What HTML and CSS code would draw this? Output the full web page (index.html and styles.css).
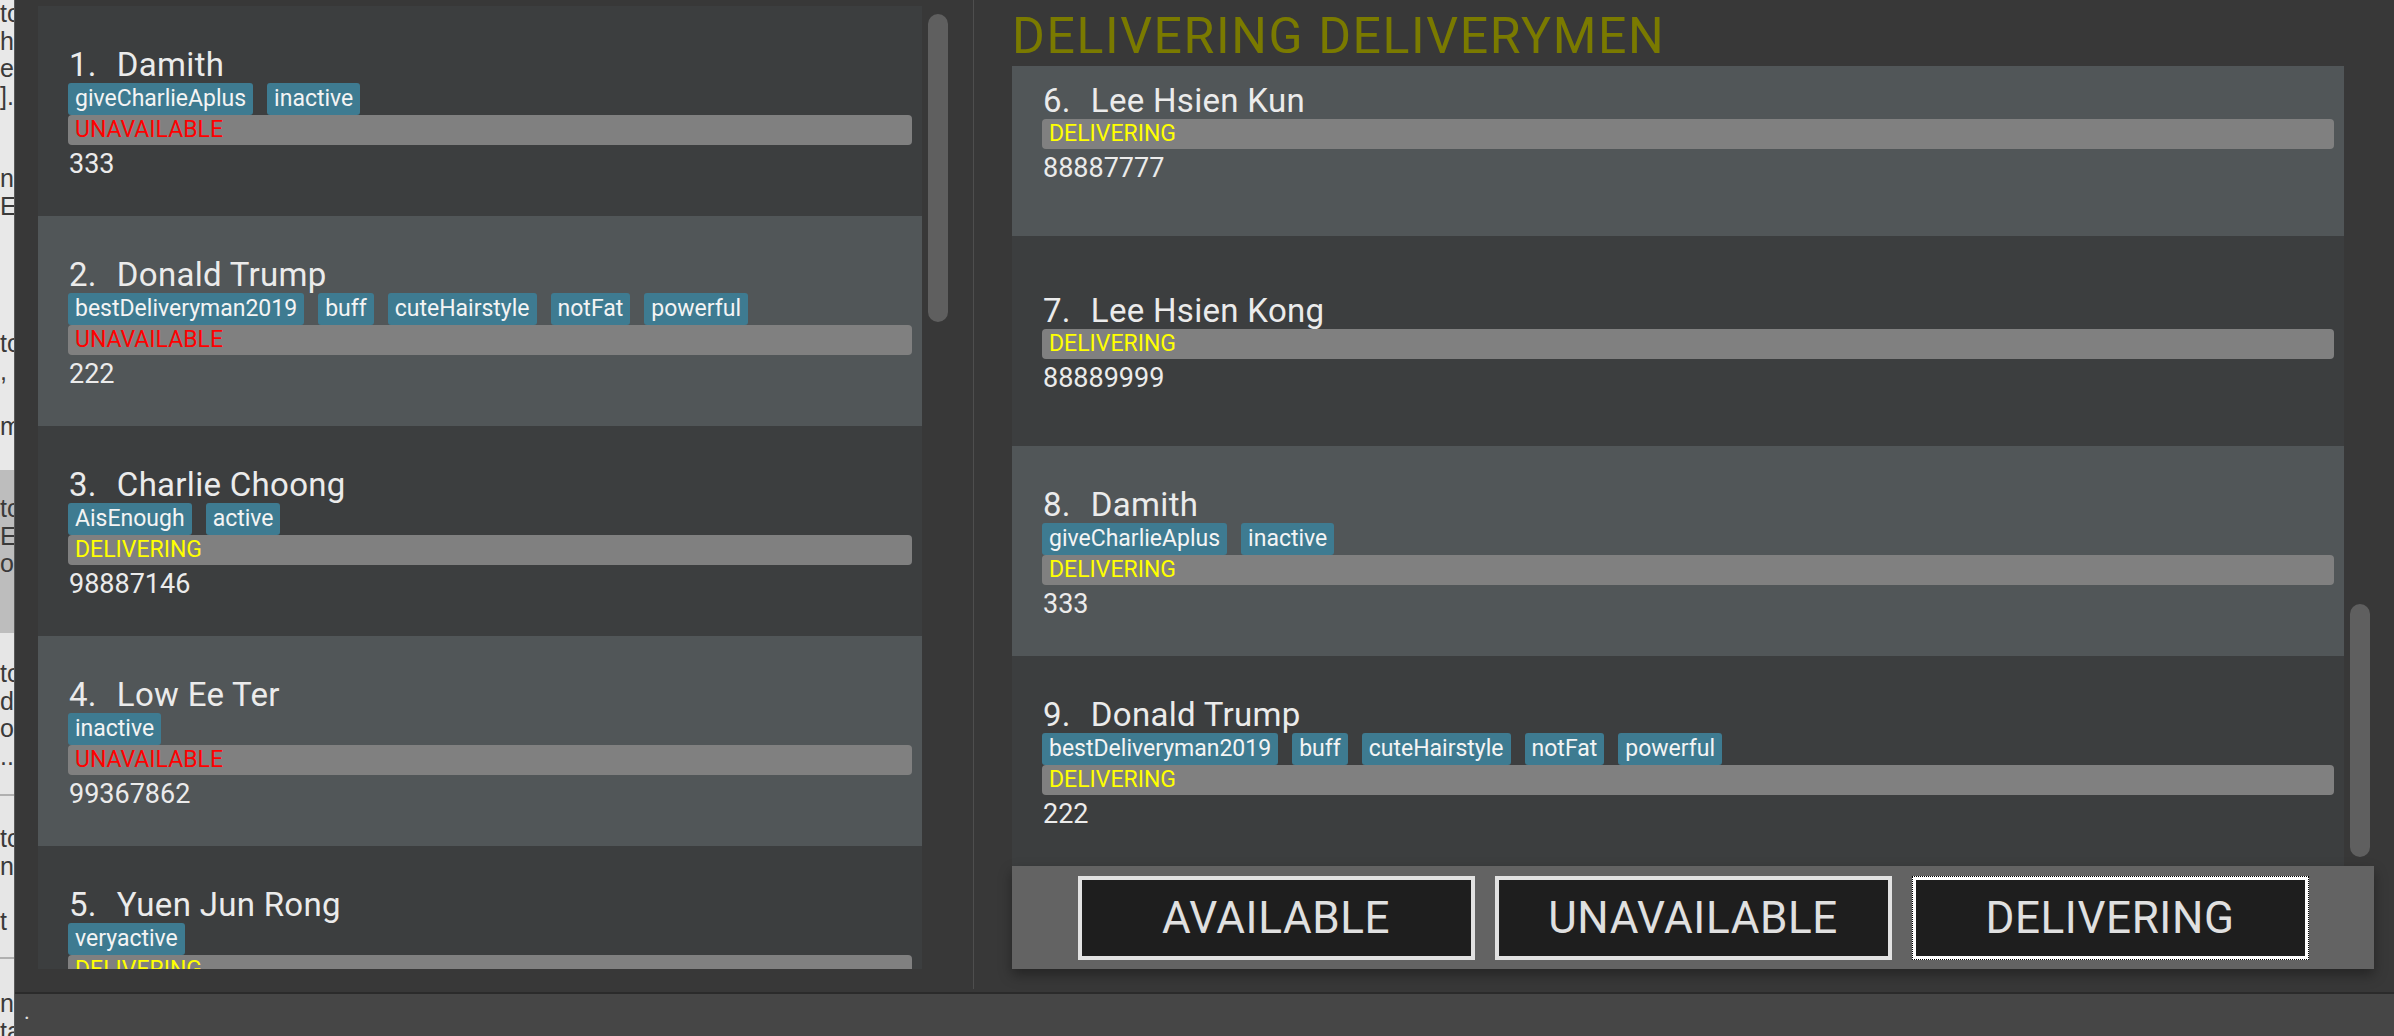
FILE: index.html
```html
<!DOCTYPE html>
<html lang="en">
<head>
<meta charset="utf-8">
<title>Deliverymen</title>
<link rel="stylesheet" href="styles.css">
</head>
<body>
<div class="strip">
  <div class="frag">to</div><div class="frag">h</div><div class="frag">e</div><div class="frag">].</div>
  <div class="frag"></div><div class="frag"></div><div class="frag">na</div><div class="frag">E I</div>
  <div class="frag"></div><div class="frag"></div><div class="frag"></div><div class="frag"></div>
  <div class="frag">to</div><div class="frag">,</div><div class="frag"></div><div class="frag">m</div>
  <div class="frag"></div><div class="frag"></div><div class="frag">to</div><div class="frag">E</div>
  <div class="frag">o</div><div class="frag"></div><div class="frag"></div><div class="frag"></div>
  <div class="frag">to</div><div class="frag">d</div><div class="frag">o</div><div class="frag">..</div>
  <div class="frag"></div><div class="frag"></div><div class="frag">to</div><div class="frag">n</div>
  <div class="frag"></div><div class="frag">t</div><div class="frag"></div><div class="frag"></div>
  <div class="frag">na</div><div class="frag">ta</div>
</div>
<div class="app">
  <div class="main">
    <div class="left-pane">
      <div class="list list-left">
        <div class="card dark">
          <div class="name"><span class="idx">1.</span>Damith</div>
          <div class="tags"><span class="tag">giveCharlieAplus</span><span class="tag">inactive</span></div>
          <div class="status unavailable">UNAVAILABLE</div>
          <div class="phone">333</div>
        </div>
        <div class="card light">
          <div class="name"><span class="idx">2.</span>Donald Trump</div>
          <div class="tags"><span class="tag">bestDeliveryman2019</span><span class="tag">buff</span><span class="tag">cuteHairstyle</span><span class="tag">notFat</span><span class="tag">powerful</span></div>
          <div class="status unavailable">UNAVAILABLE</div>
          <div class="phone">222</div>
        </div>
        <div class="card dark">
          <div class="name"><span class="idx">3.</span>Charlie Choong</div>
          <div class="tags"><span class="tag">AisEnough</span><span class="tag">active</span></div>
          <div class="status delivering">DELIVERING</div>
          <div class="phone">98887146</div>
        </div>
        <div class="card light">
          <div class="name"><span class="idx">4.</span>Low Ee Ter</div>
          <div class="tags"><span class="tag">inactive</span></div>
          <div class="status unavailable">UNAVAILABLE</div>
          <div class="phone">99367862</div>
        </div>
        <div class="card dark">
          <div class="name"><span class="idx">5.</span>Yuen Jun Rong</div>
          <div class="tags"><span class="tag">veryactive</span></div>
          <div class="status delivering">DELIVERING</div>
          <div class="phone">87654321</div>
        </div>
      </div>
      <div class="vscroll vscroll-left"></div>
    </div>
    <div class="divider"></div>
    <div class="right-pane">
      <h1 class="heading">DELIVERING DELIVERYMEN</h1>
      <div class="rcontent">
        <div class="rlist-row">
          <div class="list list-right">
            <div class="list-inner">
              <div class="card light">
                <div class="name"><span class="idx">6.</span>Lee Hsien Kun</div>
                <div class="status delivering">DELIVERING</div>
                <div class="phone">88887777</div>
              </div>
              <div class="card dark">
                <div class="name"><span class="idx">7.</span>Lee Hsien Kong</div>
                <div class="status delivering">DELIVERING</div>
                <div class="phone">88889999</div>
              </div>
              <div class="card light">
                <div class="name"><span class="idx">8.</span>Damith</div>
                <div class="tags"><span class="tag">giveCharlieAplus</span><span class="tag">inactive</span></div>
                <div class="status delivering">DELIVERING</div>
                <div class="phone">333</div>
              </div>
              <div class="card dark">
                <div class="name"><span class="idx">9.</span>Donald Trump</div>
                <div class="tags"><span class="tag">bestDeliveryman2019</span><span class="tag">buff</span><span class="tag">cuteHairstyle</span><span class="tag">notFat</span><span class="tag">powerful</span></div>
                <div class="status delivering">DELIVERING</div>
                <div class="phone">222</div>
              </div>
            </div>
          </div>
          <div class="vscroll vscroll-right"></div>
        </div>
        <div class="btnbar">
          <button class="btn">AVAILABLE</button>
          <button class="btn">UNAVAILABLE</button>
          <button class="btn focus">DELIVERING</button>
        </div>
      </div>
    </div>
  </div>
  <div class="statusbar">.</div>
</div>
</body>
</html>
```

FILE: styles.css
```css
* { box-sizing: border-box; }

html, body {
  margin: 0;
  padding: 0;
}

body {
  width: 2394px;
  height: 1036px;
  overflow: hidden;
  display: flex;
  background: #383838;
  font-family: Roboto, "Liberation Sans", Arial, sans-serif;
  color: #e9e9e9;
}

/* background window sliver on the far left */
.strip {
  width: 15px;
  height: 1036px;
  flex: none;
  overflow: hidden;
  border-right: 1px solid #5a5a5a;
  background:
    linear-gradient(to bottom,
      #e8e8e8 0, #e8e8e8 470px,
      #bdbdbd 470px, #bdbdbd 633px,
      #e6e6e6 633px, #e6e6e6 794px,
      #b0b0b0 794px, #b0b0b0 796px,
      #e6e6e6 796px, #e6e6e6 957px,
      #b0b0b0 957px, #b0b0b0 959px,
      #e6e6e6 959px);
}

.frag {
  height: 27.5px;
  line-height: 27.5px;
  font-size: 25px;
  color: #3a3a3a;
  white-space: nowrap;
  font-family: "Liberation Sans", Arial, sans-serif;
}

.app {
  flex: 1;
  display: flex;
  flex-direction: column;
  min-width: 0;
}

.main {
  height: 992px;
  display: flex;
  background: #383838;
}

.left-pane {
  width: 958px;
  flex: none;
  display: flex;
  padding: 6px 0 0 23px;
}

.list {
  overflow: hidden;
  flex: none;
}

.list-left {
  width: 884px;
  height: 963px;
}

.vscroll {
  width: 20px;
  flex: none;
  background: #5f5f5f;
  border-radius: 10px;
  margin-left: 6px;
}

.vscroll-left {
  margin-top: 8px;
  height: 308px;
}

.divider {
  width: 1px;
  height: 989px;
  background: #4e4e4e;
  flex: none;
}

.right-pane {
  flex: 1;
  padding-left: 38px;
  display: flex;
  flex-direction: column;
}

.heading {
  margin: 0;
  padding-top: 7px;
  height: 66px;
  font-size: 50px;
  line-height: 59px;
  font-weight: 400;
  color: #7a7a00;
  letter-spacing: 1.6px;
  white-space: nowrap;
}

.rcontent {
  width: 1362px;
}

.rlist-row {
  display: flex;
  height: 800px;
}

.list-right {
  width: 1332px;
  height: 800px;
}

.list-inner {
  margin-top: -40px;
}

.vscroll-right {
  margin-top: 538px;
  height: 253px;
}

/* list cells */
.card {
  height: 210px;
  display: flex;
  flex-direction: column;
  justify-content: center;
  padding: 4px 10px 0 30px;
}

.card.dark { background: #3c3e3f; }
.card.light { background: #515658; }

.name {
  font-size: 33px;
  letter-spacing: 0.3px;
  line-height: 37px;
  color: #ebebeb;
  white-space: nowrap;
  padding-left: 1px;
}

.idx {
  margin-right: 20px;
}

.tags {
  display: flex;
  gap: 14px;
  height: 32px;
}

.tag {
  background: #3e7b91;
  color: #f4f4f4;
  font-size: 23px;
  line-height: 32px;
  padding: 0 7px;
  border-radius: 3px;
  white-space: nowrap;
}

.status {
  height: 30px;
  line-height: 30px;
  font-size: 23px;
  padding-left: 7px;
  background: #808080;
  border-radius: 4px;
  margin-bottom: 3px;
}

.status.unavailable { color: #ff0000; }
.status.delivering { color: #ffff00; }

.phone {
  font-size: 27px;
  line-height: normal;
  color: #ebebeb;
  padding-left: 1px;
}

/* button bar */
.btnbar {
  height: 103px;
  background: #636363;
  display: flex;
  justify-content: center;
  align-items: flex-start;
  gap: 20px;
  padding-top: 10px;
  box-shadow: 0 6px 12px rgba(0, 0, 0, 0.35);
  position: relative;
}

.btn {
  width: 397px;
  height: 84px;
  background: #1e1e1e;
  border: 4px solid #e2e2e2;
  color: #e0e0e0;
  font-family: Roboto, "Liberation Sans", Arial, sans-serif;
  font-size: 44px;
  letter-spacing: 0.6px;
  padding: 0;
  margin: 0;
  border-radius: 0;
}

.btn.focus {
  border-color: #ffffff;
  outline: 1px dotted #000;
  outline-offset: -1px;
}

.statusbar {
  height: 44px;
  background: #464646;
  border-top: 2px solid #2b2b2b;
  font-size: 22px;
  line-height: 36px;
  padding-left: 9px;
  color: #e0e0e0;
}
```
